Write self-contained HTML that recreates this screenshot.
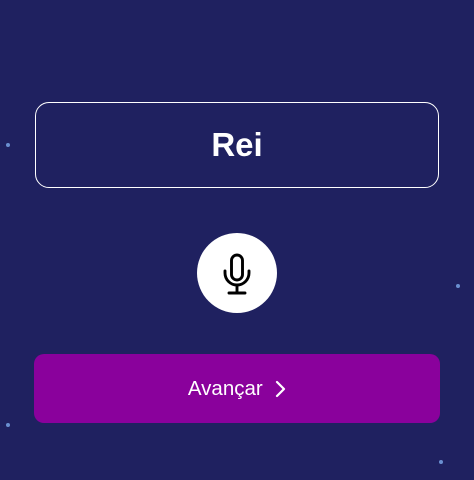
<!DOCTYPE html>
<html><head><style>
body{margin:0;width:474px;height:480px;background:#1f2160;position:relative;overflow:hidden;font-family:"Liberation Sans",sans-serif}
.box{position:absolute;left:35px;top:102px;width:402px;height:84px;border:1.5px solid #fff;border-radius:14px;color:#fff;font-weight:bold;font-size:33px;display:flex;align-items:center;justify-content:center}
.mic{position:absolute;left:197px;top:233px;width:80px;height:80px;border-radius:50%;background:#fff}
.btn{position:absolute;left:34px;top:354px;width:406px;height:69px;background:#8a019c;border-radius:10px;color:#fff;font-size:20.5px;display:flex;align-items:center;justify-content:center}
.dot{position:absolute;width:4px;height:4px;border-radius:50%;background:#6a8fd0}
</style></head><body>
<div class="dot" style="left:6px;top:143px"></div>
<div class="dot" style="left:456px;top:284px"></div>
<div class="dot" style="left:6px;top:423px"></div>
<div class="dot" style="left:439px;top:460px"></div>
<div class="box">Rei</div>
<div class="mic"><svg width="80" height="80" viewBox="0 0 80 80" fill="none" stroke="#000" stroke-width="2.9" stroke-linecap="round">
<rect x="34.5" y="22" width="11" height="25" rx="5.5"/>
<path d="M28 38v2a12 12 0 0 0 24 0v-2"/>
<path d="M40 52v8M32 60h16"/></svg></div>
<div class="btn">Avançar&nbsp;&nbsp;<svg width="12" height="18" viewBox="0 0 12 18" fill="none" stroke="#fff" stroke-width="2.2" stroke-linecap="round" stroke-linejoin="round"><path d="M3 2l7 7-7 7"/></svg></div>
</body></html>
